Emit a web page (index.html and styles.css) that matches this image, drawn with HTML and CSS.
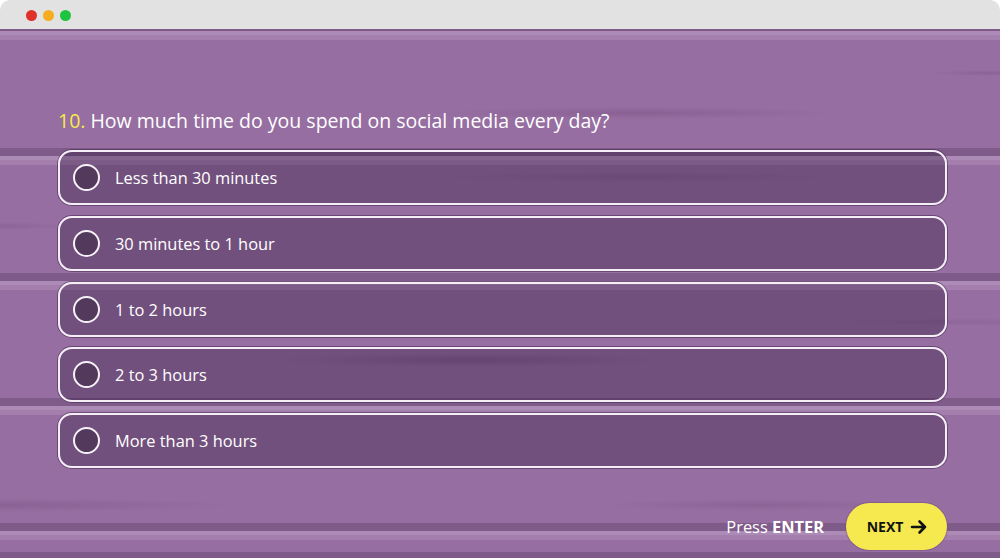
FILE: index.html
```html
<!DOCTYPE html>
<html lang="en">
<head>
<meta charset="utf-8">
<title>Survey</title>
<link rel="stylesheet" href="styles.css">
</head>
<body>
<div class="window">
  <div class="titlebar">
    <span class="dot red"></span>
    <span class="dot yellow"></span>
    <span class="dot green"></span>
  </div>
  <div class="stage">
    <div class="content">
      <h1 class="question"><span class="num">10.</span> How much time do you spend on social media every day?</h1>
      <div class="options">
        <div class="option"><span class="radio"></span><span class="label">Less than 30 minutes</span></div>
        <div class="option"><span class="radio"></span><span class="label">30 minutes to 1 hour</span></div>
        <div class="option"><span class="radio"></span><span class="label">1 to 2 hours</span></div>
        <div class="option"><span class="radio"></span><span class="label">2 to 3 hours</span></div>
        <div class="option"><span class="radio"></span><span class="label">More than 3 hours</span></div>
      </div>
      <div class="footer">
        <span class="hint">Press <b>ENTER</b></span>
        <button class="next">NEXT
          <svg width="18" height="18" viewBox="0 0 18 18" aria-hidden="true"><path d="M2 9h13M9.5 3.5L15 9l-5.5 5.5" fill="none" stroke="#111" stroke-width="2.6" stroke-linecap="round" stroke-linejoin="round"/></svg>
        </button>
      </div>
    </div>
  </div>
</div>
</body>
</html>
```

FILE: styles.css
```css
* { box-sizing: border-box; }
html, body { margin: 0; padding: 0; }
body {
  width: 1000px;
  height: 558px;
  overflow: hidden;
  background: #ffffff;
  font-family: "Open Sans", "Noto Sans", sans-serif;
}
.window {
  width: 1000px;
  height: 558px;
  display: flex;
  flex-direction: column;
}
.titlebar {
  height: 29px;
  flex: none;
  background: #e2e2e2;
  border-radius: 10px 10px 0 0;
  display: flex;
  align-items: center;
  gap: 6px;
  padding-left: 26px;
  padding-top: 1px;
}
.dot {
  width: 11px;
  height: 11px;
  border-radius: 50%;
  display: block;
}
.dot.red { background: #e0302a; }
.dot.yellow { background: #f5ad1f; }
.dot.green { background: #1ec43f; }

.stage {
  flex: 1;
  background-color: #966ea1;
  background-image:
    radial-gradient(ellipse 200px 6px at 638px 84px, rgba(120,80,130,0.45), rgba(120,80,130,0) 100%),
    radial-gradient(ellipse 60px 3px at 990px 44px, rgba(120,80,130,0.4), rgba(120,80,130,0) 100%),
    radial-gradient(ellipse 195px 7px at 470px 331px, rgba(90,60,100,0.3), rgba(90,60,100,0) 100%),
    radial-gradient(ellipse 240px 7px at 0px 476px, rgba(120,80,130,0.4), rgba(120,80,130,0) 100%),
    radial-gradient(ellipse 160px 6px at 760px 476px, rgba(120,80,130,0.35), rgba(120,80,130,0) 100%),
    radial-gradient(ellipse 70px 4px at 0px 197px, rgba(120,80,130,0.35), rgba(120,80,130,0) 100%),
    radial-gradient(ellipse 120px 4px at 960px 293px, rgba(120,80,130,0.25), rgba(120,80,130,0) 100%),
    radial-gradient(ellipse 200px 5px at 640px 148px, rgba(90,60,100,0.18), rgba(90,60,100,0) 100%),
    repeating-linear-gradient(to bottom,
      #7f5b89 0px, #7f5b89 8px,
      #ad8bb7 8px, #ad8bb7 12px,
      #a47fae 12px, #a47fae 17px,
      #966ea1 17px, #966ea1 125px);
  background-position: 0 0, 0 0, 0 0, 0 0, 0 0, 0 0, 0 0, 0 0, 0 -6px;
}
.content {
  padding: 78px 53px 0 58px;
  display: flex;
  flex-direction: column;
}
.question {
  margin: 0;
  height: 28px;
  font-size: 19.5px;
  line-height: 28px;
  font-weight: 400;
  color: #ffffff;
  white-space: nowrap;
}
.num { color: #f6e94a; }
.options {
  margin-top: 15px;
  display: flex;
  flex-direction: column;
  gap: 10.8px;
}
.option {
  height: 55px;
  border: 2px solid #f4eef6;
  border-radius: 14px;
  background: rgba(20, 0, 30, 0.27);
  box-shadow: 0 0 0 1px rgba(70, 40, 80, 0.55);
  display: flex;
  align-items: center;
  padding-left: 12.5px;
}
.radio {
  width: 27px;
  height: 27px;
  border-radius: 50%;
  border: 2px solid #f7f2f8;
  background: #533a5d;
  flex: none;
}
.label {
  margin-left: 15.5px;
  font-size: 16.4px;
  color: #ffffff;
}
.footer {
  margin-top: 35px;
  display: flex;
  justify-content: flex-end;
  align-items: center;
  gap: 22px;
}
.hint {
  color: #ffffff;
  font-size: 16.4px;
}
.hint b { font-weight: 700; }
.next {
  width: 101px;
  height: 47px;
  border: none;
  border-radius: 24px;
  background: #f6e84f;
  box-shadow: 0 0 0 1px rgba(120, 80, 130, 0.5);
  color: #111;
  font-family: "Open Sans", "Noto Sans", sans-serif;
  font-size: 14px;
  font-weight: 700;
  display: flex;
  align-items: center;
  justify-content: center;
  gap: 7px;
  padding: 0 0 0 2px;
}
.next svg { display: block; }
```
